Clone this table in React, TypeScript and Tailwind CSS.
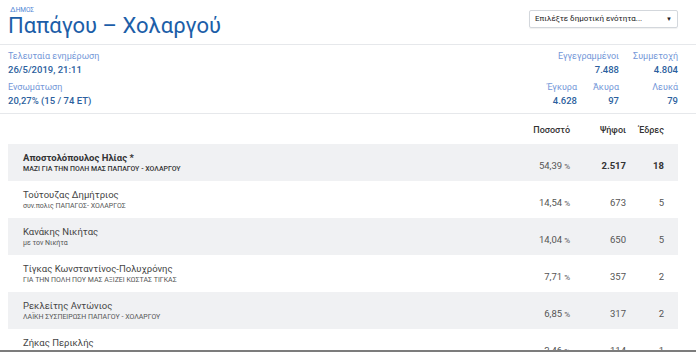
import React from "react";

const rows = [
  { name: "Αποστολόπουλος Ηλίας *", party: "ΜΑΖΙ ΓΙΑ ΤΗΝ ΠΟΛΗ ΜΑΣ ΠΑΠΑΓΟΥ - ΧΟΛΑΡΓΟΥ", pct: "54,39", votes: "2.517", seats: "18", bold: true },
  { name: "Τούτουζας Δημήτριος", party: "συν.πολις ΠΑΠΑΓΟΣ- ΧΟΛΑΡΓΟΣ", pct: "14,54", votes: "673", seats: "5" },
  { name: "Κανάκης Νικήτας", party: "με τον Νικήτα", pct: "14,04", votes: "650", seats: "5" },
  { name: "Τίγκας Κωνσταντίνος-Πολυχρόνης", party: "ΓΙΑ ΤΗΝ ΠΟΛΗ ΠΟΥ ΜΑΣ ΑΞΙΖΕΙ ΚΩΣΤΑΣ ΤΙΓΚΑΣ", pct: "7,71", votes: "357", seats: "2" },
  { name: "Ρεκλείτης Αντώνιος", party: "ΛΑΪΚΗ ΣΥΣΠΕΙΡΩΣΗ ΠΑΠΑΓΟΥ - ΧΟΛΑΡΓΟΥ", pct: "6,85", votes: "317", seats: "2" },
  { name: "Ζήκας Περικλής", party: "", pct: "2,46", votes: "114", seats: "1" },
];

export default function App() {
  return (
    <div className="relative w-[696px] h-[352px] overflow-hidden bg-white font-['Roboto',sans-serif] text-[#333]">
      {/* Header */}
      <div className="flex items-start justify-between pl-2 pr-[18px] pt-[2px] h-[45px] border-b border-[#e6e8eb]">
        <div className="flex flex-col">
          <div className="h-[10px] leading-[10px] text-[#4f86d6] pl-[2px] whitespace-nowrap">
            <span className="text-[8px]">Δ</span><span className="text-[6.5px]">ΗΜΟΣ</span>
          </div>
          <div className="text-[22px] leading-[28px] text-[#1c5ea8]">Παπάγου – Χολαργού</div>
        </div>
        <div className="mt-[8px] w-[149px] h-[18px] border border-[#d3d7dc] rounded-[2px] shadow-[0_1px_1px_rgba(0,0,0,0.06)] flex items-center justify-between pl-[5px] pr-[5px]">
          <span className="text-[8px] leading-none text-[#222]">Επιλέξτε δημοτική ενότητα...</span>
          <span className="text-[6px] leading-none text-[#222]">▼</span>
        </div>
      </div>

      {/* Info */}
      <div className="flex justify-between pl-2 pr-[18px] pt-[5px] h-[69px] border-b border-[#e6e8eb] leading-[13px]">
        <div className="flex flex-col gap-[5px]">
          <div>
            <div className="text-[9px] text-[#7497d8]">Τελευταία ενημέρωση</div>
            <div className="text-[9.5px] font-medium text-[#2c5f9e]">26/5/2019, 21:11</div>
          </div>
          <div>
            <div className="text-[9px] text-[#7497d8]">Ενσωμάτωση</div>
            <div className="text-[9.5px] font-medium text-[#2c5f9e]">20,27% (15 / 74 ET)</div>
          </div>
        </div>
        <div className="flex flex-col gap-[5px]">
          <div className="flex justify-end">
            <div className="text-right">
              <div className="text-[9px] text-[#7497d8]">Εγγεγραμμένοι</div>
              <div className="text-[9.5px] font-medium text-[#2c5f9e]">7.488</div>
            </div>
            <div className="w-[59px] text-right">
              <div className="text-[9px] text-[#7497d8]">Συμμετοχή</div>
              <div className="text-[9.5px] font-medium text-[#2c5f9e]">4.804</div>
            </div>
          </div>
          <div className="flex justify-end">
            <div className="text-right">
              <div className="text-[9px] text-[#7497d8]">Έγκυρα</div>
              <div className="text-[9.5px] font-medium text-[#2c5f9e]">4.628</div>
            </div>
            <div className="w-[42px] text-right">
              <div className="text-[9px] text-[#7497d8]">Άκυρα</div>
              <div className="text-[9.5px] font-medium text-[#2c5f9e]">97</div>
            </div>
            <div className="w-[59px] text-right">
              <div className="text-[9px] text-[#7497d8]">Λευκά</div>
              <div className="text-[9.5px] font-medium text-[#2c5f9e]">79</div>
            </div>
          </div>
        </div>
      </div>

      {/* Table */}
      <div className="pl-2 pr-[18px]">
        <div className="flex items-center h-[30px] pt-[3px] pr-[14px] text-[9px] font-medium text-[#333]">
          <div className="flex-1" />
          <div className="w-[80px] text-right">Ποσοστό</div>
          <div className="w-[56px] text-right">Ψήφοι</div>
          <div className="w-[38px] text-right">Έδρες</div>
        </div>
        {rows.map((r, i) => (
          <div key={i} className={`flex items-start h-[37px] pr-[14px] ${i % 2 === 0 ? "bg-[#f0f1f3]" : "bg-white"}`}>
            <div className="flex-1 pl-[15px] pt-[7px]">
              <div className={`text-[9.5px] leading-[13px] ${r.bold ? "font-bold text-[#333]" : "text-[#444]"}`}>{r.name}</div>
              <div className={`text-[7px] leading-[11px] ${r.bold ? "font-medium text-[#333]" : "text-[#555]"}`}>{r.party}</div>
            </div>
            <div className="w-[80px] text-right pt-[15px] text-[9.5px] leading-[13px] text-[#555]">
              {r.pct}<span className="text-[8px]"> %</span>
            </div>
            <div className={`w-[56px] text-right pt-[15px] text-[9.5px] leading-[13px] ${r.bold ? "font-bold text-[#333]" : "text-[#555]"}`}>{r.votes}</div>
            <div className={`w-[38px] text-right pt-[15px] text-[9.5px] leading-[13px] ${r.bold ? "font-bold text-[#333]" : "text-[#555]"}`}>{r.seats}</div>
          </div>
        ))}
      </div>

      <div className="absolute bottom-0 left-0 right-0 h-[2px] bg-[#7c7c7c]" />
    </div>
  );
}
